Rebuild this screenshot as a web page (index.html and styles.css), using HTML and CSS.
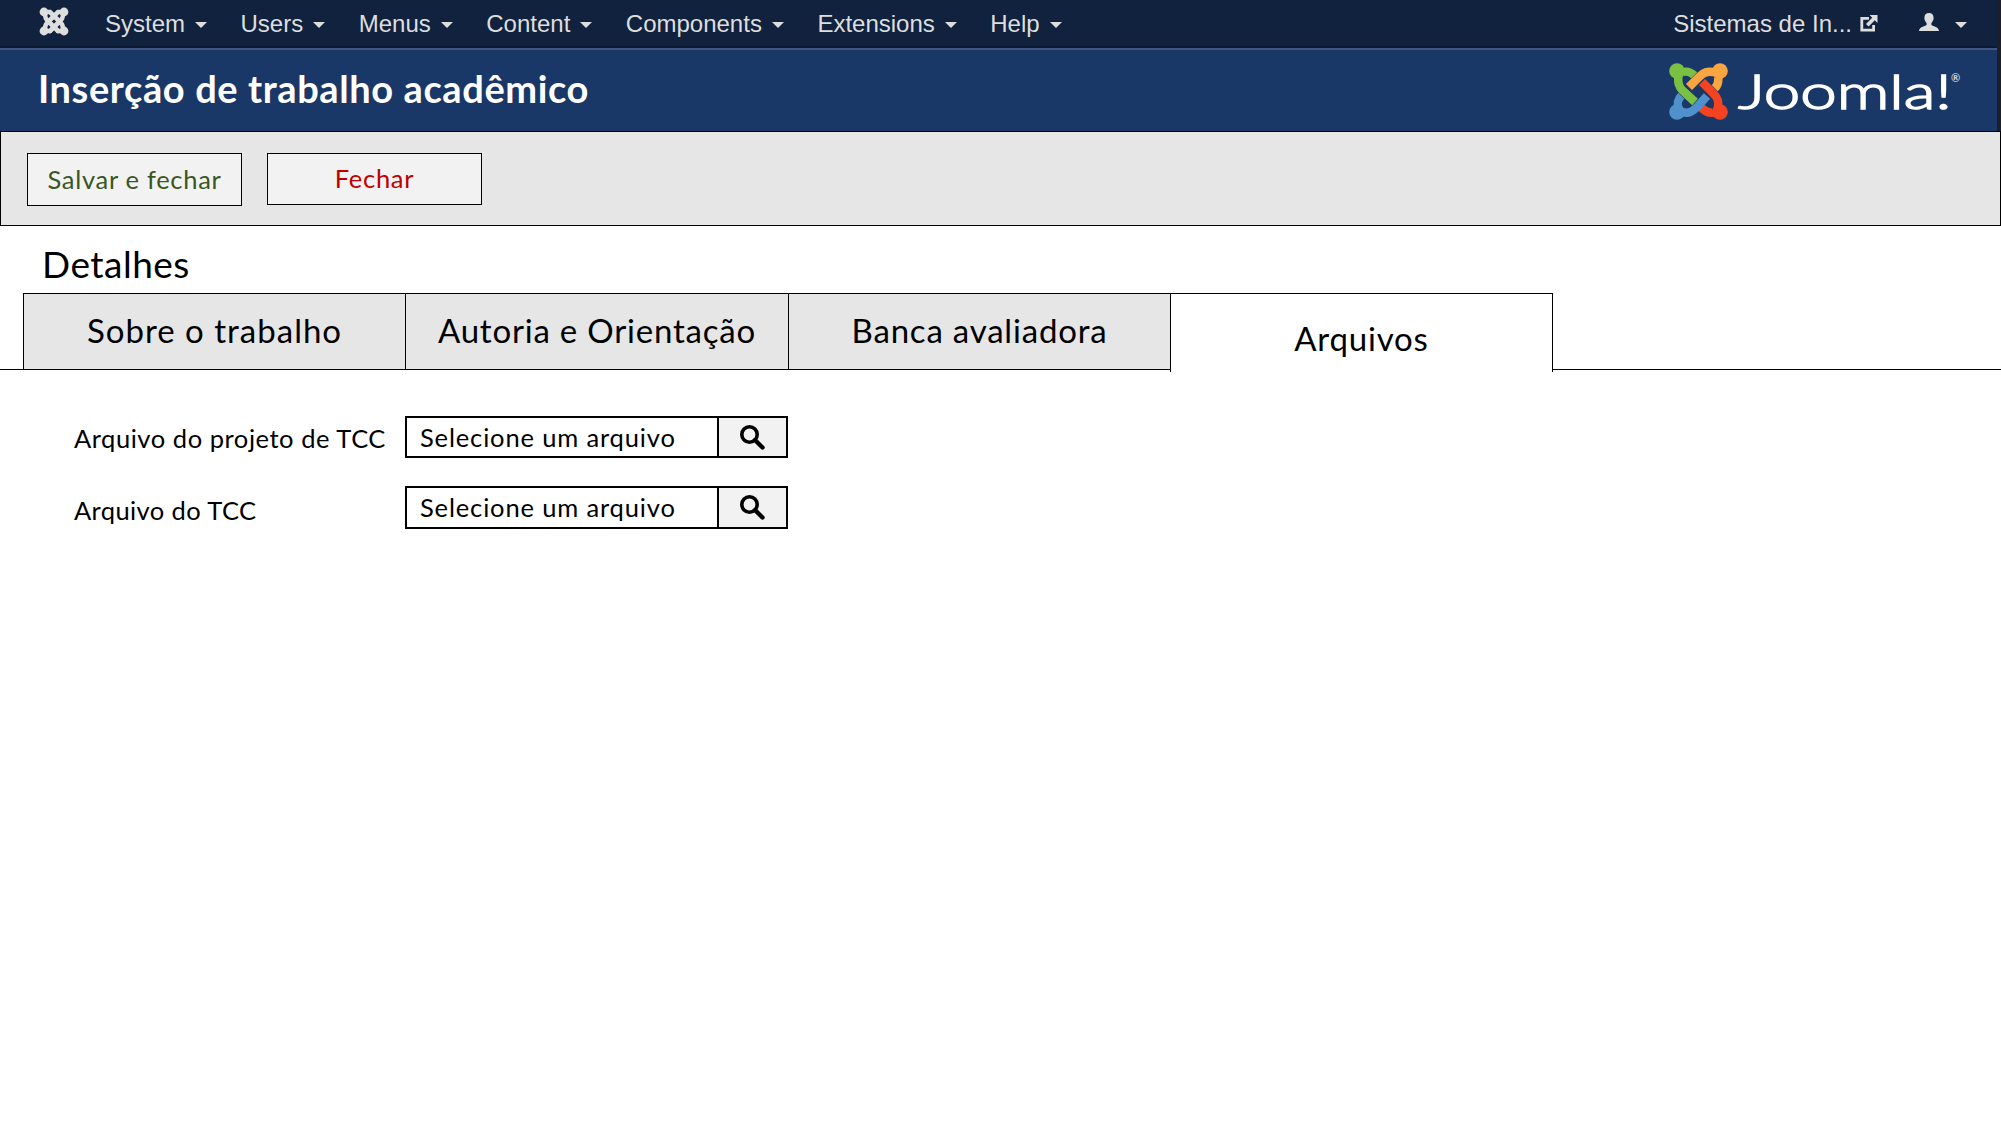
FILE: index.html
```html
<!DOCTYPE html>
<html lang="pt-BR">
<head>
<meta charset="utf-8">
<title>Inserção de trabalho acadêmico</title>
<link rel="stylesheet" href="styles.css">
</head>
<body>
<div class="top">
  <nav class="navbar">
    <svg class="brand" viewBox="0 0 30 29" width="30" height="29">
      <g fill="none" stroke="#dedede" stroke-width="4.6" stroke-linecap="round">
        <path d="M6 6C6 11 7 12 9 14L19 24"/><path d="M24 6C24 11 23 12 21 14L11 24"/>
        <path d="M6 23C6 18 7 17 9 15L19 5L24 5"/><path d="M24 23C24 18 23 17 21 15L11 5L6 5"/>
        <path d="M11 24H6M19 24H24"/>
      </g>
      <g fill="#dedede"><circle cx="5" cy="5" r="4.4"/><circle cx="25" cy="5" r="4.4"/><circle cx="5" cy="24" r="4.4"/><circle cx="25" cy="24" r="4.4"/></g>
    </svg>
    <ul class="menu">
      <li>System<i class="caret"></i></li>
      <li>Users<i class="caret"></i></li>
      <li>Menus<i class="caret"></i></li>
      <li>Content<i class="caret"></i></li>
      <li>Components<i class="caret"></i></li>
      <li>Extensions<i class="caret"></i></li>
      <li>Help<i class="caret"></i></li>
    </ul>
    <div class="site">Sistemas de In...
      <svg viewBox="0 0 18 17" width="18" height="17"><path d="M9 3.4H1.8V15.2H13.6V10" fill="none" stroke="#dedede" stroke-width="2.8"/><path d="M9.6 0H17.5V8L14.8 5.3L8.6 11.5L6 8.9L12.2 2.7Z" fill="#dedede"/></svg>
    </div>
    <div class="user">
      <svg viewBox="0 0 20 18" width="20" height="18"><path d="M10 0C13 0 14.6 2 14.6 4.8C14.6 7.2 13.6 8.8 12.4 10V12C14.5 13.4 19.6 13.8 20 18H0C.4 13.8 5.5 13.4 7.6 12V10C6.4 8.8 5.4 7.2 5.4 4.8C5.4 2 7 0 10 0Z" fill="#dedede"/></svg>
      <i class="caret"></i>
    </div>
  </nav>
  <header class="header">
    <h1 class="title">Inserção de trabalho acadêmico</h1>
    <svg class="logo" viewBox="0 0 296 62" width="296" height="62">
      <g fill="none" stroke-width="8.5">
        <path d="M49 11C50 19 49 23 44 27" stroke="#f9a541"/>
        <path d="M11 10C18 7 22 9 26 13" stroke="#7ac143"/>
        <path d="M10 47C7 40 9 36 13 32" stroke="#5091cd"/>
        <path d="M48 49C41 51 36 49 32 44" stroke="#f44321"/>
        <path d="M10 48C20 52 24 48 28 44L38 33" stroke="#5091cd"/>
        <path d="M48 48C51 38 48 34 44 30L33 19" stroke="#1a3867" stroke-width="9.5"/>
        <path d="M48 48C51 38 48 34 44 30L33 19" stroke="#f44321"/>
        <path d="M48 10C38 7 34 10 30 14L20 24" stroke="#1a3867" stroke-width="9.5"/>
        <path d="M48 10C38 7 34 10 30 14L20 24" stroke="#f9a541"/>
        <path d="M10 10C8 20 10 24 14 28L26 39" stroke="#1a3867" stroke-width="9.5"/>
        <path d="M10 10C8 20 10 24 14 28L26 39" stroke="#7ac143"/>
      </g>
      <circle cx="8" cy="8" r="7.8" fill="#7ac143"/><circle cx="51" cy="8" r="7.8" fill="#f9a541"/>
      <circle cx="8" cy="49" r="7.8" fill="#5091cd"/><circle cx="51" cy="49" r="7.8" fill="#f44321"/>
      <text class="wordmark" x="69" y="46" textLength="214" lengthAdjust="spacingAndGlyphs">Joomla!</text>
      <text class="reg" x="282" y="19">®</text>
    </svg>
  </header>
</div>
<div class="toolbar">
  <button class="btn btn-save">Salvar e fechar</button>
  <button class="btn btn-close">Fechar</button>
</div>
<main>
  <h2 class="section">Detalhes</h2>
  <div class="tabs">
    <div class="tab wide">Sobre o trabalho</div>
    <div class="tab">Autoria e Orientação</div>
    <div class="tab">Banca avaliadora</div>
    <div class="tab active">Arquivos</div>
  </div>
  <form class="form">
    <label class="label">Arquivo do projeto de TCC</label>
    <div class="file"><span class="value">Selecione um arquivo</span><span class="search"><svg viewBox="0 0 26 25" width="26" height="25"><circle cx="10.5" cy="9.5" r="7.7" fill="none" stroke="#000" stroke-width="3.6"/><path d="M16 15L23.5 22.5" stroke="#000" stroke-width="4.4" stroke-linecap="round"/></svg></span></div>
    <label class="label second">Arquivo do TCC</label>
    <div class="file tall"><span class="value">Selecione um arquivo</span><span class="search"><svg viewBox="0 0 26 25" width="26" height="25"><circle cx="10.5" cy="9.5" r="7.7" fill="none" stroke="#000" stroke-width="3.6"/><path d="M16 15L23.5 22.5" stroke="#000" stroke-width="4.4" stroke-linecap="round"/></svg></span></div>
  </form>
</main>
</body>
</html>
```
FILE: styles.css
```css
* { box-sizing: border-box; }
body { margin: 0; background: #fff; color: #000; font-family: Lato, "Open Sans", sans-serif; }
.top { border-right: 4px solid #1c1f29; }
.navbar {
  display: flex; align-items: center; height: 50px; padding: 0 30px 0 39px;
  background: #10223e; border-bottom: 2px solid #3f5682; box-shadow: inset 0 -2px 0 #0c1932;
  font: 24px "Liberation Sans", sans-serif; color: #dedede;
}
.brand { margin: -5px 36px 0 0; }
.menu { display: flex; gap: 33.5px; margin: 0; padding: 0; list-style: none; }
.menu li, .site, .user { display: flex; align-items: center; gap: 10px; }
.caret { width: 0; height: 0; border: 6.25px solid transparent; border-top-color: #dedede; border-bottom: 0; margin-top: 1px; }
.site { margin-left: auto; gap: 8px; }
.site svg { margin-top: -1px; }
.user { margin-left: 41px; gap: 16px; }
.user svg { margin-top: -5px; }
.header { display: flex; justify-content: space-between; height: 81px; padding: 13px 32px 0 38px; background: #1a3867; }
.title { margin: 3px 0 0; font-size: 38px; line-height: 44px; letter-spacing: .6px; font-weight: 700; color: #fff; white-space: nowrap; }
.wordmark { font: 300 47px Lato, sans-serif; fill: #fff; stroke: #fff; stroke-width: 1.5px; }
.reg { font: 11px Lato, sans-serif; fill: #fff; }
.toolbar { display: flex; align-items: flex-start; gap: 25px; height: 95px; padding: 21px 26px; background: #e6e6e6; border: 1px solid #000; }
.btn { width: 215px; height: 53px; padding: 0; border: 1px solid #000; background: #f2f2f2; font: 25.5px/1 Lato, sans-serif; letter-spacing: .7px; }
.btn-save { color: #385723; }
.btn-close { height: 52px; padding-bottom: 1px; color: #c00000; }
.section { margin: 0; height: 67px; padding: 16px 0 0 42px; font-size: 37px; line-height: 44px; letter-spacing: .5px; font-weight: 400; }
.tabs { display: grid; grid-template-columns: 382px 383px 382px 383px; height: 77px; padding-left: 23px; border-bottom: 1px solid #000; }
.tab { display: flex; align-items: center; justify-content: center; height: 76px; padding-bottom: 3px; border: 1px solid #000; border-width: 1px 0 0 1px; background: #e6e6e6; font-size: 33px; letter-spacing: .8px; }
.tab.wide { letter-spacing: 1px; }
.tab.active { height: 79px; padding: 10px 0 0; border-right-width: 1px; background: #fff; }
.form { display: grid; grid-template-columns: 331px 383px; row-gap: 28px; padding: 46px 0 0 74px; }
.label { padding-top: 6px; font-size: 25.5px; line-height: 32px; letter-spacing: .55px; white-space: nowrap; }
.label.second { padding-top: 8px; letter-spacing: .4px; }
.file { display: flex; height: 42px; border: 2px solid #000; font-size: 25.5px; letter-spacing: .85px; }
.file.tall { height: 43px; }
.value { flex: 1; padding: 3px 0 0 13px; line-height: 32px; white-space: nowrap; }
.search { display: flex; justify-content: center; align-items: center; width: 69px; padding-right: 2px; border-left: 2px solid #000; background: #f2f2f2; }
```
